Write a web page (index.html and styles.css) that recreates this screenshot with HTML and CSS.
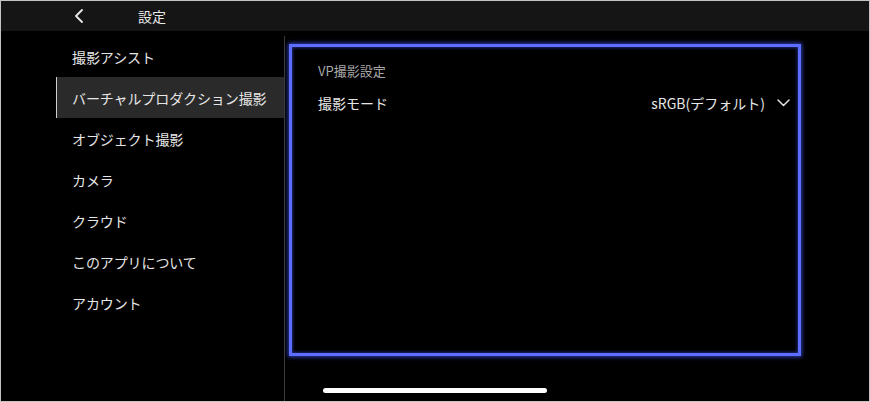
FILE: index.html
```html
<!DOCTYPE html>
<html lang="ja">
<head>
<meta charset="utf-8">
<title>設定</title>
<link rel="stylesheet" href="styles.css">
</head>
<body>
<div class="screen">
  <header class="topbar">
    <span class="back">
      <svg width="10" height="14" viewBox="0 0 10 14"><path d="M8 1 L2 7 L8 13" fill="none" stroke="#e8e8e8" stroke-width="1.8" stroke-linecap="round" stroke-linejoin="round"/></svg>
    </span>
    <span class="title">設定</span>
  </header>
  <div class="body">
    <nav class="sidebar">
      <div class="item">撮影アシスト</div>
      <div class="item active">バーチャルプロダクション撮影</div>
      <div class="item">オブジェクト撮影</div>
      <div class="item">カメラ</div>
      <div class="item">クラウド</div>
      <div class="item">このアプリについて</div>
      <div class="item">アカウント</div>
    </nav>
    <main class="content">
      <section class="panel">
        <div class="panel-title">VP撮影設定</div>
        <div class="row">
          <span class="label">撮影モード</span>
          <span class="value">sRGB(デフォルト)
            <svg class="chev" width="13" height="8" viewBox="0 0 13 8"><path d="M1 1 L6.5 6.5 L12 1" fill="none" stroke="#e0e0e0" stroke-width="1.5" stroke-linecap="round" stroke-linejoin="round"/></svg>
          </span>
        </div>
      </section>
    </main>
  </div>
  <div class="home-indicator"></div>
</div>
</body>
</html>
```
FILE: styles.css
```css
html, body {
  margin: 0;
  padding: 0;
  background: #000;
}
body {
  width: 870px;
  height: 402px;
  font-family: "Noto Sans CJK JP", "Noto Sans", sans-serif;
  color: #e6e6e6;
}
.screen {
  position: relative;
  box-sizing: border-box;
  width: 870px;
  height: 402px;
  border: 1px solid #c4c4c4;
  background: #000;
  display: flex;
  flex-direction: column;
  overflow: hidden;
}
.topbar {
  height: 30px;
  background: #151515;
  display: flex;
  align-items: center;
  flex-shrink: 0;
}
.back {
  display: flex;
  align-items: center;
  margin-left: 73px;
  width: 10px;
  height: 14px;
}
.title {
  margin-left: 54px;
  font-size: 14px;
  color: #e8e8e8;
  line-height: 1;
}
.body {
  flex: 1;
  display: flex;
  padding-top: 5px;
}
.sidebar {
  width: 228px;
  margin-left: 55px;
  border-right: 1px solid #3a3a3a;
  display: flex;
  flex-direction: column;
}
.item {
  height: 41px;
  display: flex;
  align-items: center;
  padding-left: 16px;
  font-size: 14px;
  color: #e6e6e6;
  letter-spacing: -0.1px;
}
.item.active {
  background: #2a2a2a;
  border-left: 1px solid #cfcfcf;
  padding-left: 15px;
}
.content {
  flex: 1;
  padding: 8px 68px 0 4px;
}
.panel {
  box-sizing: border-box;
  height: 312px;
  border: 3px solid #5d6dff;
  box-shadow: 0 0 4px 1px rgba(70, 90, 255, 0.7), inset 0 0 3px 1px rgba(70, 90, 255, 0.45);
  padding: 14px 8px 0 26px;
}
.panel-title {
  font-size: 13px;
  color: #a9a9a9;
  line-height: 20px;
}
.row {
  margin-top: 12px;
  display: flex;
  justify-content: space-between;
  align-items: center;
  height: 20px;
}
.label {
  font-size: 14px;
  color: #e6e6e6;
}
.value {
  font-size: 14px;
  color: #e6e6e6;
  display: flex;
  align-items: center;
}
.chev {
  margin-left: 12px;
}
.home-indicator {
  position: absolute;
  left: 322px;
  top: 387px;
  width: 224px;
  height: 5px;
  border-radius: 3px;
  background: #fff;
}
```
